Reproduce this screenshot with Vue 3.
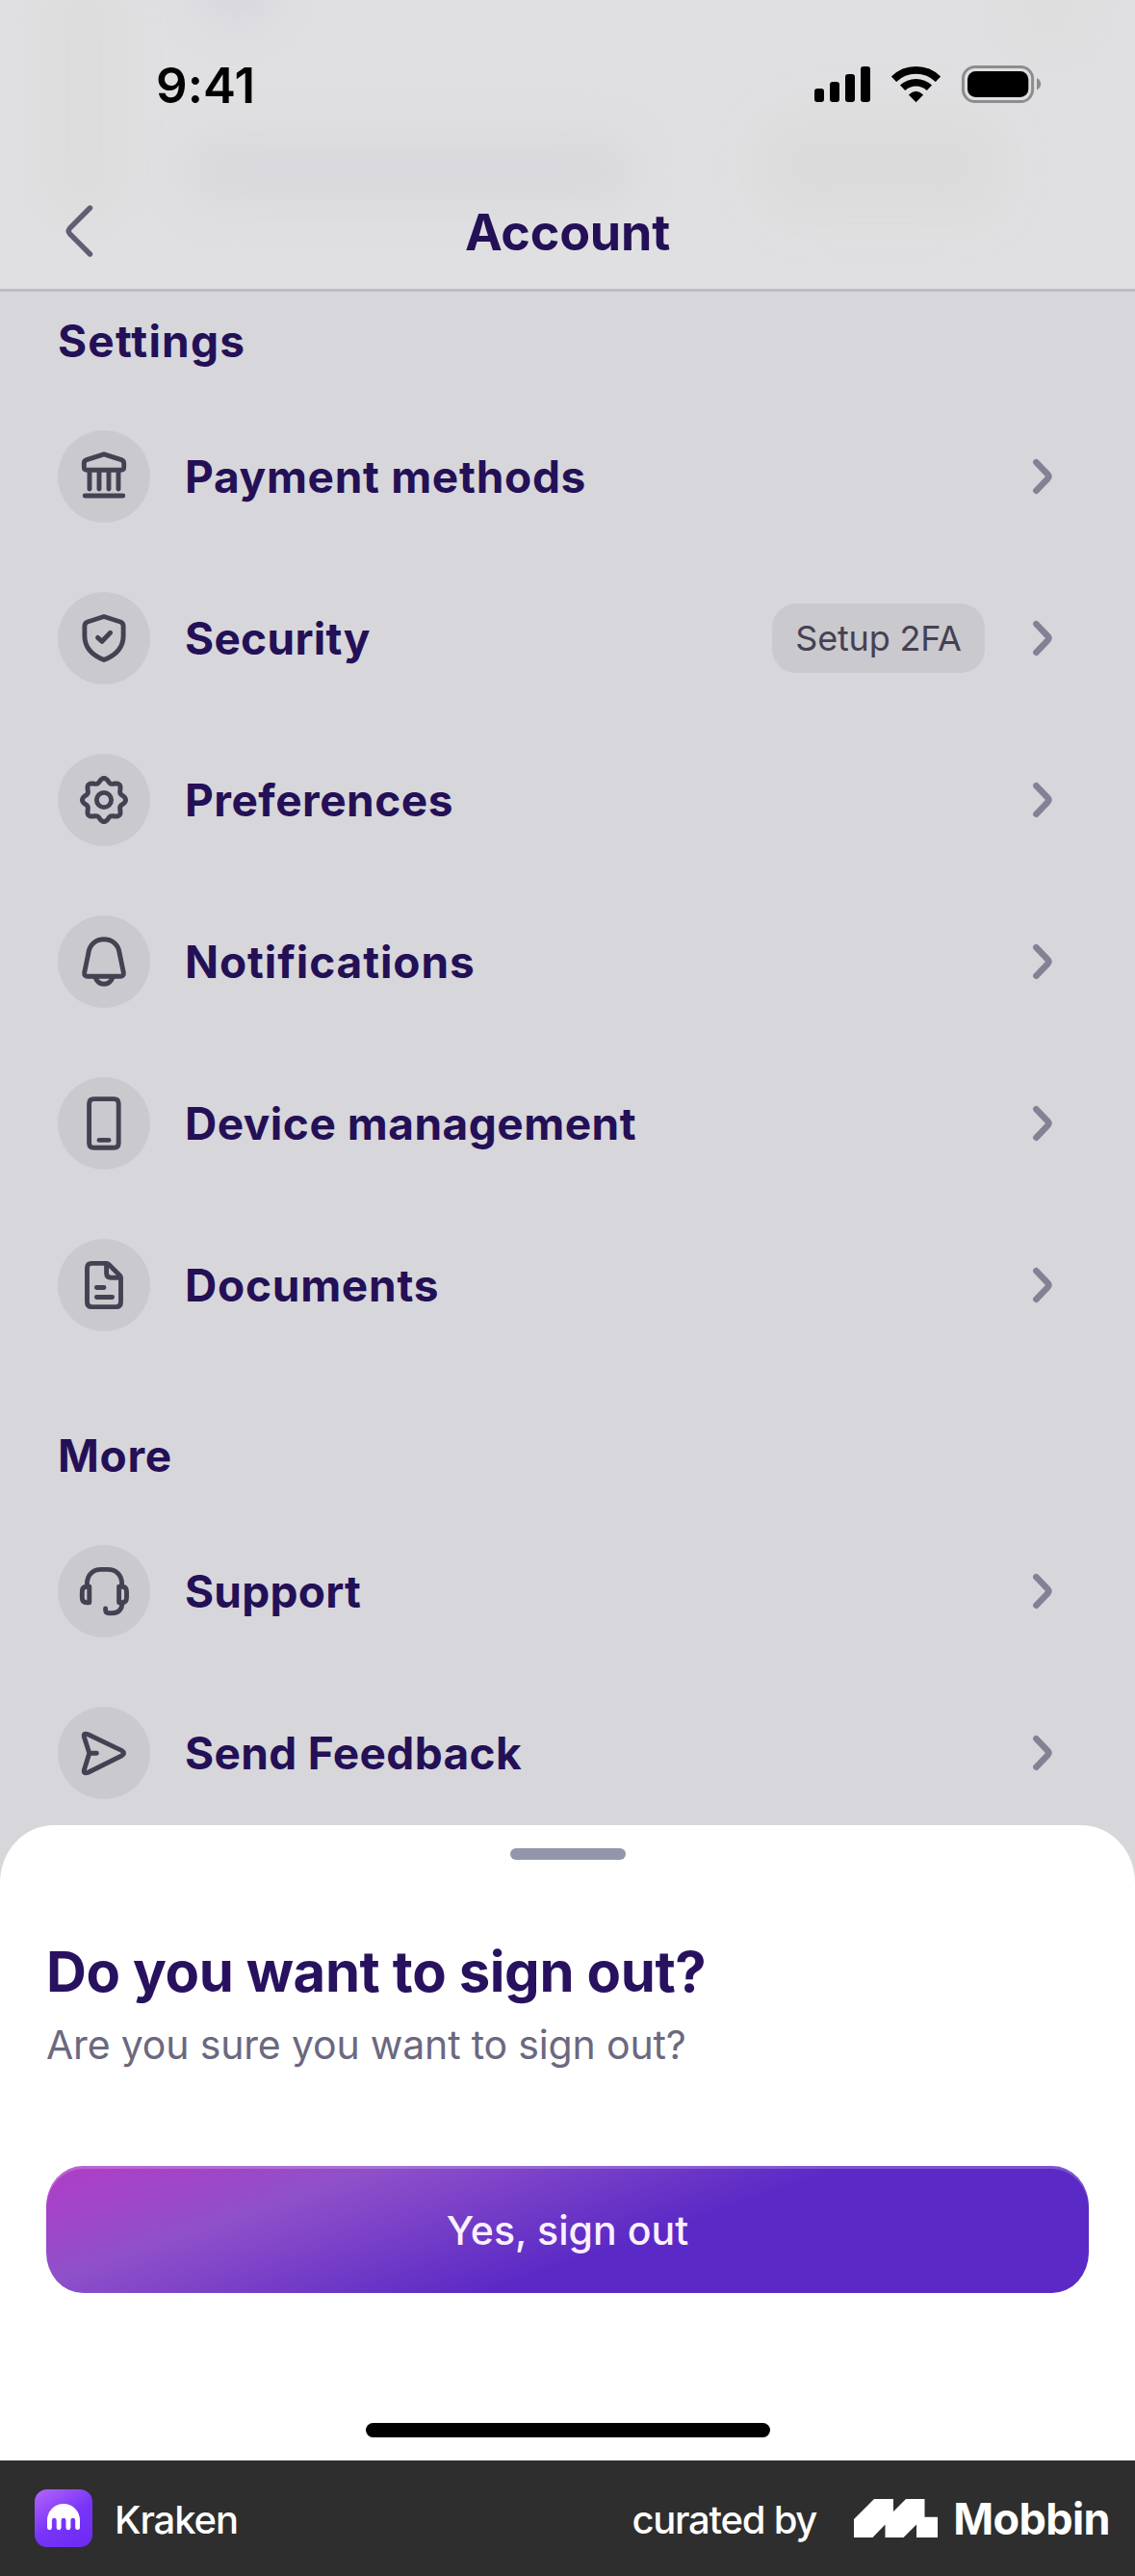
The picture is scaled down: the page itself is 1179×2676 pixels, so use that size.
<script setup>
const gear =
  Array.from({ length: 96 }, (_, i) => {
    const a = (i / 96) * Math.PI * 2
    const r = 20.4 + 2.2 * Math.cos(8 * a)
    return `${i ? 'L' : 'M'}${(48 + r * Math.sin(a)).toFixed(2)} ${(48 - r * Math.cos(a)).toFixed(2)}`
  }).join('') + 'Z'

const sections = [
  {
    title: 'Settings',
    spacing: 1.2,
    rows: [
      {
        label: 'Payment methods',
        spacing: 0.7,
        paths: [
          'M48 24.8L66 30.6Q68.7 31.6 68.7 34.5V38.3Q68.7 41.3 65.7 41.3H30.3Q27.3 41.3 27.3 38.3V34.5Q27.3 31.6 30 30.6Z',
          'M33 43V61M43 43V61M53 43V61M63 43V61M28.2 68H67.8',
        ],
      },
      {
        label: 'Security',
        spacing: 0.3,
        badge: 'Setup 2FA',
        paths: [
          'M48 25.5L65 31Q68.1 32.2 68.1 35.5V45.5C68.1 58 59.5 66 48 70.5C36.5 66 27.9 58 27.9 45.5V35.5Q27.9 32.2 31 31Z',
          'M41.5 47.3L46 51.3L54.6 42.3',
        ],
      },
      {
        label: 'Preferences',
        spacing: 0.5,
        paths: [gear, 'M40.4 48a7.6 7.6 0 1 0 15.2 0a7.6 7.6 0 1 0-15.2 0'],
      },
      {
        label: 'Notifications',
        spacing: 0.9,
        paths: [
          'M48 24.8C39.5 24.8 33 30.5 32 38.5L27.7 59.2Q27.2 63.3 31 63.3H65Q68.8 63.3 68.3 59.2L64 38.5C63 30.5 56.5 24.8 48 24.8Z',
          'M39 64.5C41 69.3 44 71.2 48 71.2C52 71.2 55 69.3 57 64.5',
        ],
      },
      {
        label: 'Device management',
        spacing: 0.5,
        paths: [
          'M37.6 22.6H58.2Q63.2 22.6 63.2 27.6V68.2Q63.2 73.2 58.2 73.2H37.6Q32.6 73.2 32.6 68.2V27.6Q32.6 22.6 37.6 22.6Z',
          'M43 65.4H53',
        ],
      },
      {
        label: 'Documents',
        spacing: 0.75,
        paths: [
          'M35.4 25.4H50.5Q52 25.4 53 26.4L64.5 38Q65.5 39 65.5 40.5V65.7Q65.5 70.6 60.6 70.6H35.4Q30.5 70.6 30.5 65.7V30.3Q30.5 25.4 35.4 25.4Z',
          'M50.6 26V35.5Q50.6 40.3 55.4 40.3H64.5M40.4 50.5H48M40.4 60.5H56.6',
        ],
      },
    ],
  },
  {
    title: 'More',
    spacing: 0.7,
    rows: [
      {
        label: 'Support',
        spacing: 0.25,
        paths: [
          'M30.4 42V40.5C30.4 30.5 37 25.4 45 25.4H52C60 25.4 66.6 30.5 66.6 40.5V42',
          'M32.8 43.2H30Q25.3 43.2 25.3 48.5V54.5Q25.3 59.7 30 59.7H32.8ZM63.6 43.2H66.8Q71.5 43.2 71.5 48.5V54.5Q71.5 59.7 66.8 59.7H63.6Z',
          'M49.6 66V67.2Q49.6 70.7 53.2 70.7H56.5C62.5 70.7 66.8 67.2 66.8 60.5',
        ],
      },
      {
        label: 'Send Feedback',
        spacing: 0.35,
        paths: [
          'M31.5 28.7L66.2 45.4Q70.8 48.3 66.2 51L31.5 68.3Q26 70.3 27.6 65L32.8 48.3L27.6 32Q26 26.6 31.5 28.7ZM32.8 48.3H40.4',
        ],
      },
    ],
  },
]
</script>

<template>
  <div class="app">
    <header class="top">
      <i class="haze h1"></i><i class="haze h2"></i><i class="haze h3"></i><i class="haze h4"></i><i class="haze h5"></i>
      <div class="status">
        <span class="time">9:41</span>
        <svg class="indicators" width="240" height="44" viewBox="844 66 240 44">
          <rect x="846" y="92" width="10" height="14" rx="3" />
          <rect x="862" y="85" width="10" height="21" rx="3" />
          <rect x="878" y="77" width="10" height="29" rx="3" />
          <rect x="894" y="69" width="10" height="37" rx="3" />
          <g fill="none" stroke="#000" stroke-width="7.6">
            <path d="M928.5 82.2A33 33 0 0 1 974.5 82.2" />
            <path d="M937.6 91.3A20 20 0 0 1 965.4 91.3" />
          </g>
          <path d="M951.5 106.3L943.9 98.4Q951.5 91.2 959.1 98.4Z" />
          <rect x="1000.4" y="69.4" width="72.2" height="36.2" rx="12.5" fill="none" stroke="#8d8d8f" stroke-width="3" />
          <rect x="1005" y="74" width="63.3" height="27" rx="8.5" />
          <path d="M1077 81Q1081.2 83.5 1081.2 87.3Q1081.2 91.2 1077 93.6Z" fill="#8d8d8f" />
        </svg>
      </div>
      <div class="nav">
        <svg class="back" width="34" height="60" viewBox="0 0 34 60">
          <path d="M28.500 6L7.500 27.2Q5 30 7.500 32.8L28.500 54" fill="none" stroke="#615d74" stroke-width="5.4" stroke-linecap="round" />
        </svg>
        <h1>Account</h1>
      </div>
    </header>

    <main class="list">
      <section v-for="s in sections" :key="s.title">
        <h2 :style="{ letterSpacing: s.spacing + 'px' }">{{ s.title }}</h2>
        <ul>
          <li v-for="row in s.rows" :key="row.label">
            <svg class="icon" viewBox="0 0 96 96"><path v-for="d in row.paths" :key="d" :d="d" /></svg>
            <span class="label" :style="{ letterSpacing: row.spacing + 'px' }">{{ row.label }}</span>
            <span v-if="row.badge" class="badge">{{ row.badge }}</span>
            <svg class="chevron" width="20" height="38" viewBox="0 0 20 38"><path d="M3.4 4.2L15.3 16.6Q17.3 19 15.3 21.2L3.4 33.7" /></svg>
          </li>
        </ul>
      </section>
    </main>

    <section class="sheet">
      <div class="handle"></div>
      <h3>Do you want to sign out?</h3>
      <p>Are you sure you want to sign out?</p>
      <button>Yes, sign out</button>
      <div class="home"></div>
    </section>

    <footer class="foot">
      <svg class="logo" width="60" height="60" viewBox="0 0 60 60">
        <defs>
          <linearGradient id="kraken" x1="0" y1="0" x2="0.65" y2="1">
            <stop offset="0" stop-color="#b565fb" />
            <stop offset="0.6" stop-color="#7835f7" />
            <stop offset="1" stop-color="#702cf5" />
          </linearGradient>
        </defs>
        <rect width="60" height="60" rx="13" fill="url(#kraken)" />
        <path d="M13 32A17 17 0 0 1 47 32V39.7A2.4 2.4 0 0 1 42.2 39.7V32.2A2.4 2.4 0 0 0 37.4 32.2V39.7A2.4 2.4 0 0 1 32.5 39.7V32.2A2.4 2.4 0 0 0 27.6 32.2V39.7A2.4 2.4 0 0 1 22.7 39.7V32.2A2.4 2.4 0 0 0 17.9 32.2V39.7A2.4 2.4 0 0 1 13 39.7Z" fill="#fff" />
      </svg>
      <span class="brand">Kraken</span>
      <span class="curated">curated by</span>
      <svg class="mark" width="87" height="40" viewBox="0 0 87 40">
        <path d="M0 21L21 0H41V13L54 0H73.500V18.800H87V40H65V26.500L51.500 40H32.500V26.500L19.500 40H0Z" fill="#fff" />
      </svg>
      <span class="mobbin">Mobbin</span>
    </footer>
  </div>
</template>

<style>
body { margin: 0; }
</style>

<style scoped>
.app {
  width: 1179px;
  height: 2676px;
  display: flex;
  flex-direction: column;
  overflow: hidden;
  background: #d7d6db;
  font-family: Inter, "Liberation Sans", sans-serif;
  color: #241056;
}
h1, h2, h3, p, ul { margin: 0; padding: 0; }
.top {
  position: relative;
  height: 303px;
  flex: none;
  box-sizing: border-box;
  border-bottom: 3px solid #bdbcc0;
  background: #e0e0e2;
  overflow: hidden;
}
.haze { position: absolute; border-radius: 50px; filter: blur(22px); background: #dbdbdb; }
.h1 { left: 45px; top: -30px; width: 85px; height: 260px; opacity: .7; }
.h2 { left: 205px; top: -50px; width: 80px; height: 75px; background: #d6d5de; }
.h3 { left: 190px; top: 140px; width: 470px; height: 75px; background: #d9d8dc; }
.h4 { left: 785px; top: 115px; width: 260px; height: 115px; opacity: .85; }
.h5 { left: 1060px; top: -20px; width: 60px; height: 55px; background: #dcdcda; }
.status { position: relative; display: flex; align-items: center; height: 176px; box-sizing: border-box; padding: 0 95px 0 162px; justify-content: space-between; }
.time { font-size: 51px; font-weight: 600; letter-spacing: .1px; color: #000; }
.nav { position: relative; height: 124px; display: grid; grid-template-columns: 100px 1fr 100px; align-items: start; }
.back { margin: 34px 0 0 65px; }
h1 { font-size: 52px; line-height: 64px; margin-top: 34px; font-weight: 700; text-align: center; letter-spacing: -.2px; }
.list { height: 1593px; flex: none; box-sizing: border-box; padding: 21px 83px 0 60px; display: flex; flex-direction: column; gap: 99px; }
h2 { font-size: 46px; line-height: 60px; margin-bottom: 63px; font-weight: 700; }
ul { list-style: none; display: flex; flex-direction: column; gap: 72px; }
li { display: flex; align-items: center; height: 96px; }
.icon { width: 96px; height: 96px; flex: none; border-radius: 50%; background: #cac9ce; fill: none; stroke: #454152; stroke-width: 4.9; stroke-linecap: round; stroke-linejoin: round; }
.label { margin-left: 36px; flex: 1; font-size: 46px; font-weight: 700; white-space: nowrap; }
.badge { width: 221px; height: 72px; border-radius: 25px; background: #cac9ce; color: #454152; font-size: 36px; line-height: 72px; text-align: center; letter-spacing: -.2px; margin-right: 50px; }
.chevron { flex: none; margin-right: 3px; fill: none; stroke: #858195; stroke-width: 6.6; stroke-linecap: round; }
.sheet {
  height: 660px;
  flex: none;
  box-sizing: border-box;
  padding: 24px 48px;
  display: flex;
  flex-direction: column;
  background: #fff;
  border-radius: 56px 56px 0 0 / 60px 60px 0 0;
}
.handle { width: 120px; height: 12px; border-radius: 6px; background: #9396ab; align-self: center; flex: none; }
h3 { margin: 80px 0 0; font-size: 58px; line-height: 72px; font-weight: 700; letter-spacing: -.38px; color: #28125f; }
p { margin-top: 14px; font-size: 41px; line-height: 52px; letter-spacing: -.17px; color: #6b6880; }
button {
  margin-top: 100px;
  height: 132px;
  flex: none;
  border: 0;
  border-radius: 38px / 42px;
  font: 500 41px/132px Inter, sans-serif;
  letter-spacing: .05px;
  color: #faf0fe;
  box-shadow: inset 0 3px 0 rgba(255, 255, 255, .2);
  background: linear-gradient(161deg, #aa40c8 5%, #8f50c9 24%, #5b2ac6 57%);
}
.home { width: 420px; height: 15px; border-radius: 8px; background: #000; align-self: center; margin-top: 135px; }
.foot { height: 120px; flex: none; display: flex; align-items: center; padding: 0 26px 0 36px; background: #2e2e2e; color: #fff; white-space: nowrap; }
.brand { margin: 3px 0 0 23px; font-size: 40px; font-weight: 500; letter-spacing: -1.1px; }
.curated { margin: 3px 0 0 auto; font-size: 40px; font-weight: 500; letter-spacing: -1.25px; }
.mark { margin: 0 0 0 39px; }
.mobbin { margin-left: 16px; font-size: 45px; font-weight: 700; letter-spacing: -.6px; }
</style>
